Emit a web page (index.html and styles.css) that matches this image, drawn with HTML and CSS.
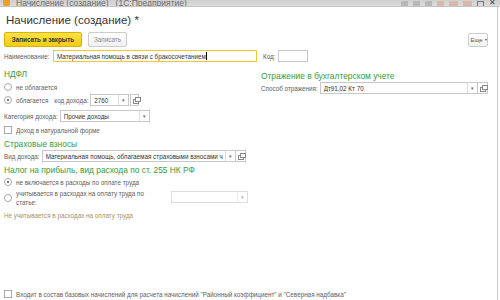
FILE: index.html
```html
<!DOCTYPE html>
<html lang="ru">
<head>
<meta charset="utf-8">
<link rel="stylesheet" href="styles.css">
</head>
<body>
<div class="titlebar">
  <span class="logo"></span>
  <span class="ttext">Начисление (создание)&nbsp;&nbsp; (1С:Предприятие)</span>
  <span class="tspacer"></span>
  <span class="ticon"></span><span class="ticon"></span><span class="ticon"></span>
  <span class="ticon faint"></span><span class="ticon faint wide"></span><span class="ticon faint wide"></span>
  <span class="ticon sq"></span><span class="tclose">✕</span>
</div>
<div class="window">
  <h1 class="title">Начисление (создание) *</h1>
  <div class="toolbar">
    <button class="btn primary">Записать и закрыть</button>
    <button class="btn second">Записать</button>
    <span class="spacer"></span>
    <button class="btn more">Еще<span class="caret"></span></button>
  </div>
  <div class="row namerow">
    <span class="label l-name">Наименование:</span>
    <span class="input focus name">Материальная помощь в связи с бракосочетанием<span class="cursor"></span></span>
    <span class="label code-l">Код:</span>
    <span class="input code"></span>
  </div>
  <div class="cols">
    <div class="col left">
      <div class="group">НДФЛ</div>
      <div class="row r-notax"><span class="radio"></span><span class="txt">не облагается</span></div>
      <div class="row r-tax">
        <span class="radio on"></span><span class="txt">облагается</span>
        <span class="label ml">код дохода:</span>
        <span class="input sel kod"><span class="val">2760</span><span class="dd">▾</span></span>
        <span class="open gap"></span>
      </div>
      <div class="row r-cat">
        <span class="label">Категория дохода:</span>
        <span class="input sel cat"><span class="val">Прочие доходы</span><span class="dd">▾</span></span>
      </div>
      <div class="row r-nat"><span class="check"></span><span class="txt">Доход в натуральной форме</span></div>
      <div class="group g2">Страховые взносы</div>
      <div class="row r-vid">
        <span class="label">Вид дохода:</span>
        <span class="input sel vid"><span class="val">Материальная помощь, облагаемая страховыми взносами ч</span><span class="dd">▾</span></span>
        <span class="open"></span>
      </div>
      <div class="group g3">Налог на прибыль, вид расхода по ст. 255 НК РФ</div>
      <div class="row r-ne"><span class="radio on"></span><span class="txt">не включается в расходы по оплате труда</span></div>
      <div class="row r-uch">
        <span class="radio"></span><span class="txt two">учитывается в расходах на оплату труда по статье:</span>
        <span class="input sel dis"><span class="val"></span><span class="dd">▾</span></span>
      </div>
      <div class="note">Не учитывается в расходах на оплату труда</div>
    </div>
    <div class="col right">
      <div class="group">Отражение в бухгалтерском учете</div>
      <div class="row r-sp">
        <span class="label">Способ отражения:</span>
        <span class="input sel sp"><span class="val">Дт91,02 Кт 70</span><span class="dd">▾</span></span>
        <span class="open"></span>
      </div>
    </div>
  </div>
  <div class="row bottom"><span class="check"></span><span class="txt">Входит в состав базовых начислений для расчета начислений "Районный коэффициент" и "Северная надбавка"</span></div>
</div>
</body>
</html>
```
FILE: styles.css
```css
* { box-sizing: border-box; }
html, body { margin: 0; padding: 0; }
body {
  width: 500px; height: 300px; overflow: hidden; background: #fff;
  font-family: "Liberation Sans", Arial, sans-serif; font-size: 6.3px; color: #444;
}
.titlebar {
  height: 7px; overflow: hidden; display: flex; align-items: flex-end;
  background: linear-gradient(#cfcfcf, #dcdcdc); border-bottom: 1px solid #c4c4c4;
}
.logo { width: 7px; height: 7px; background: #f0a020; border-radius: 2px; margin: 0 6px 0 3px; flex: none; }
.ttext { font-size: 8.5px; color: #6a6a6a; line-height: 9px; margin-bottom: -2px; white-space: pre; }
.tspacer { flex: 1; }
.ticon { width: 7px; height: 5px; background: #b8b8b8; margin-right: 5px; flex: none; }
.ticon.faint { background: #d8b8a8; }
.ticon.wide { width: 9px; }
.ticon.sq { background: none; border: 1px solid #777; border-bottom: none; width: 7px; }
.tclose { font-size: 8px; color: #444; line-height: 7px; margin-right: 4px; }
.window {
  height: 293px; border-right: 1px solid #c8c8c8; margin-right: 2px;
  padding: 0 0 0 4px; display: flex; flex-direction: column;
}
.title { font-size: 11.5px; font-weight: normal; color: #333; margin: 4px 0 0 2px; height: 18px; line-height: 18px; }
.toolbar { display: flex; align-items: center; margin-top: 3px; height: 15px; }
.btn {
  font-family: inherit; font-size: 6.3px; height: 15px; padding: 0; margin: 0 6px 0 0;
  background: linear-gradient(#fff, #f0f0f0); border: 1px solid #ccc; border-radius: 2px; color: #888;
  white-space: nowrap;
}
.btn.primary { background: linear-gradient(#fbe04a, #f2cc10); border-color: #d8b400; color: #333; font-weight: bold; width: 78px; }
.btn.second { width: 39px; }
.btn.more {
  color: #555; width: 20px; margin-right: 9px; height: 14px; padding: 0 0 0 1px; font-size: 6px;
  display: flex; align-items: center; justify-content: center; gap: 2px;
}
.caret { width: 0; height: 0; border-left: 1.5px solid transparent; border-right: 1.5px solid transparent; border-top: 2px solid #555; }
.spacer { flex: 1; }
.row { display: flex; align-items: center; height: 12px; white-space: nowrap; }
.label { color: #606060; margin-right: 2px; }
.input { height: 12px; border: 1px solid #c8c8c8; background: #fff; display: flex; align-items: center; padding-left: 3px; color: #333; }
.input.focus { border-color: #f0c832; }
.namerow { margin-top: 3px; }
.l-name { width: 47px; }
.name { width: 204px; }
.cursor { width: 1px; height: 8px; background: #000; display: inline-block; }
.code-l { margin-left: 6px; margin-right: 0; width: 15px; }
.code { width: 30px; }
.cols { display: flex; }
.col.left { width: 257px; flex: none; }
.col.right { flex: 1; }
.group { color: #3a9a3a; font-size: 8.4px; height: 12px; line-height: 12px; }
.left > .group:first-child { margin-top: 6px; }
.right > .group { margin-top: 8px; }
.radio { width: 8px; height: 8px; border: 1px solid #a8a8a8; border-radius: 50%; margin-right: 4px; flex: none; position: relative; background: #fff; }
.radio.on::after { content: ""; position: absolute; left: 2px; top: 2px; width: 2px; height: 2px; border-radius: 50%; background: #444; }
.check { width: 8px; height: 8px; border: 1px solid #a8a8a8; margin-right: 4px; flex: none; background: #fff; }
.txt { color: #606060; }
.ml { margin-left: 6px; width: 34px; }
.sel { padding-right: 0; }
.sel .val { flex: 1; overflow: hidden; }
.dd { width: 10px; height: 10px; border-left: 1px solid #ddd; font-size: 5px; color: #666; display: flex; align-items: center; justify-content: center; flex: none; }
.open { width: 10px; height: 12px; border: 1px solid #c8c8c8; border-left: none; flex: none; position: relative; }
.open.gap { border-left: 1px solid #c8c8c8; margin-left: 1px; width: 9px; }
.open::before, .open::after { content: ""; position: absolute; width: 4px; height: 3px; border: 1px solid #888; }
.open::before { left: 2px; top: 4px; }
.open::after { left: 4px; top: 2px; background: #fff; width: 4px; height: 3px; }
.r-notax { margin-top: 1px; }
.r-tax { margin-top: 1px; }
.kod { width: 39px; }
.r-cat { margin-top: 4px; }
.cat { width: 90px; }
.r-nat { margin-top: 2px; }
.g2 { margin-top: 2px; }
.vid { width: 194px; }
.g3 { margin-top: 2px; }
.r-ne { margin-top: 0; }
.r-uch { height: 19px; margin-top: 1px; align-items: flex-start; }
.r-uch .radio { margin-top: 5px; }
.two { white-space: normal; width: 134px; line-height: 9px; margin-right: 21px; }
.dis { width: 77px; height: 12px; border-color: #ddd; margin-top: 2px; }
.dis .dd { color: #aaa; border-left-color: #eee; }
.note { color: #a89060; margin-top: 2px; height: 12px; line-height: 12px; }
.r-sp { margin-top: 0; }
.sp { width: 158px; }
.bottom { margin-top: auto; margin-bottom: 0; height: 12px; }
```
